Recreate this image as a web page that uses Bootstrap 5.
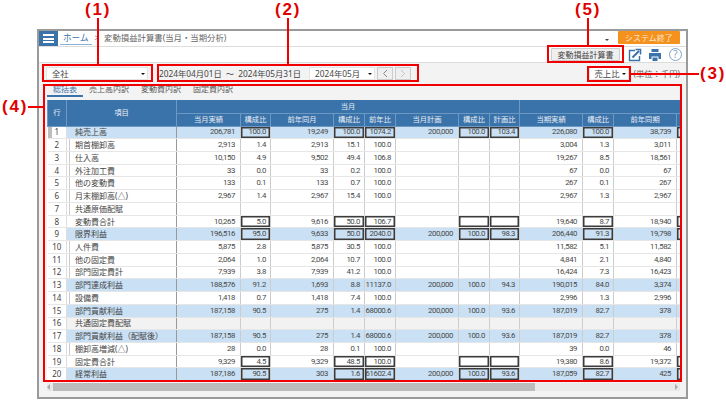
<!DOCTYPE html>
<html lang="ja">
<head>
  <meta charset="UTF-8" />
  <title>変動損益計算書</title>
  <link href="https://cdn.jsdelivr.net/npm/bootstrap@5.3.0/dist/css/bootstrap.min.css" rel="stylesheet" />
  <style>
    body {
      background: #fff;
      font-family: "Noto Sans", "Noto Sans CJK JP", sans-serif;
      font-size: 8px;
      line-height: 1;
      color: #444;
      overflow: hidden;
    }
    .stage { position: relative; width: 726px; height: 400px; padding: 29px 38px 0 37px; }
    .win { width: 651px; height: 370px; border: 2px solid #9a9a9a; background: #f3f3f3; }

    .topbar { height: 16px; background: #fff; border-bottom: 1px solid #ddd; }
    .burger { width: 19px; height: 15px; background: #3a72aa; padding: 3px 4px; }
    .burger i { display: block; height: 2px; background: #fff; }
    .crumb-home { color: #3a72aa; font-size: 8.6px; line-height: 9px; padding: 3px 3px 1px; margin-left: 2px; border-bottom: 1px solid #8ab0d6; text-decoration: none; }
    .crumb-sep { color: #888; margin: 3px 5px 0 3px; }
    .crumb-title { font-size: 8.4px; color: #666; margin-top: 3px; }
    .caret-down { width: 0; height: 0; border: 2.5px solid transparent; border-top-color: #444; border-bottom: 0; }
    .btn-quit { width: 62px; height: 13px; margin: 0 6px 0 9px; padding: 0; border: 0; border-radius: 1px; background: #f5921e; color: #fbe6cc; font-size: 8px; line-height: 13px; }

    .subbar { height: 16px; background: #fff; border-bottom: 1px solid #ddd; padding-right: 4px; }
    .btn-report { width: 69px; height: 13px; padding: 0; border: 1px solid #ccc; border-radius: 1px; background: #efefef; color: #444; font-size: 8px; line-height: 11px; }
    .ico-print { margin-left: 6px; }
    .help-mark { width: 13px; height: 13px; margin-left: 7px; border: 1px solid #7fa3c7; border-radius: 50%; color: #7fa3c7; font-size: 10px; line-height: 11px; text-align: center; }

    .toolbar { height: 21px; padding: 4px 6px 0 7px; font-size: 8.3px; }
    .tb-text { line-height: 13px; white-space: nowrap; }
    .pick { height: 13px; padding: 0 2px 0 5px; background: #fff; border: 1px solid #e4e4e4; border-radius: 0; color: #444; font-size: 8.3px; line-height: 11px; display: flex; align-items: center; justify-content: space-between; }
    .pick.dropdown-toggle::after { margin: 0; border-top-color: #111; border-top-width: 2.5px; border-left-width: 2.5px; border-right-width: 2.5px; }
    .pick-all { width: 102px; }
    .pick-month { width: 66px; margin-left: 8px; }
    .pick-ratio { width: 40px; margin-right: 5px; }
    .date-range { margin-left: 11px; }
    .date-tilde { margin: 0 4px; }
    .step { width: 16px; height: 13px; margin-left: 2px; padding: 0; background: #efefef; border: 1px solid #ccc; border-radius: 0; display: flex; align-items: center; justify-content: center; }
    .unit-text { color: #666; }

    .tabs-row { height: 13px; padding-left: 8px; margin-bottom: 3px; }
    .tabs-row .nav-link { padding: 0 6px; height: 13px; font-size: 8px; line-height: 10px; color: #555; border-bottom: 1px solid transparent; }
    .tabs-row .nav-link.active { color: #3a72aa; border-bottom: 2px solid #3a72aa; }

    .grid-wrap { width: 633px; margin-left: 8px; height: 283px; overflow: hidden; }
    .pl-grid { table-layout: fixed; border-collapse: collapse; width: 633px; background: #fff; }
    .pl-grid th { background: #3a72aa; color: #e8eef5; font-weight: 400; font-size: 7.3px; text-align: center; padding: 0; height: 13px; border: 1px solid #6c98c4; border-top: 0; }
    .pl-grid td { height: 12.74px; padding: 0 4px 0 0; text-align: right; font-family: Roboto, "Noto Sans", sans-serif; font-size: 7.8px; letter-spacing: -0.4px; line-height: 10px; white-space: nowrap; overflow: visible; border-right: 1px solid #ccc; border-bottom: 1px solid #e6e6e6; color: #484848; }
    .pl-grid td.no { text-align: center; font-family: "Noto Sans", sans-serif; font-size: 8px; letter-spacing: 0; padding: 0; background: #fff !important; border-right: 1px solid #ddd; color: #444; }
    .pl-grid td.item { text-align: left; font-family: "Noto Sans", "Noto Sans CJK JP", sans-serif; font-size: 8px; letter-spacing: 0; padding: 0 0 0 8px; border-right: 1px solid #999; color: #444; }
    .pl-grid td.indent { box-shadow: inset 2px 0 0 #fff, inset 3px 0 0 #ccc; }
    .pl-grid td.amt { padding-right: 5px; }
    .pl-grid tr.hl td { background: #cae0f4; }
    .pl-grid tr.gr td { background: #f2f2f2; }
    .pl-grid tr.head-mark td.no { box-shadow: inset 4px 0 0 #bdbdbd; }
    .pl-grid td.boxed { box-shadow: inset 0 0 0 1.5px #3c3c3c; }
    .pl-grid td.boxed-cut { border-right: 0; box-shadow: inset 1.5px 0 0 #3c3c3c, inset 0 1.5px 0 #3c3c3c, inset 0 -1.5px 0 #3c3c3c; }

    .hscroll { width: 633px; height: 8px; margin: 0 0 0 8px; background: #e9e9e9; }
    .hscroll-thumb { width: 482px; margin-left: 3px; background: #bcbcbc; }
    .arrow-l { width: 0; height: 0; border: 3px solid transparent; border-right-color: #aaa; border-left: 0; margin: 1px 0 0 0; }
    .arrow-r { width: 0; height: 0; border: 3px solid transparent; border-left-color: #aaa; border-right: 0; margin: 1px 2px 0 auto; }

    .note { position: absolute; font-family: "Liberation Sans", sans-serif; font-weight: 700; font-size: 17px; line-height: 20px; color: #e00000; letter-spacing: 1.8px; white-space: nowrap; }
    .note-box { position: absolute; border: 2px solid #f00000; }
    .note-line { position: absolute; background: #f00000; }
    .n1 { left: 85px; top: 0; }
    .n2 { left: 275px; top: 0; }
    .n5 { left: 575px; top: 0; }
    .n3 { left: 700px; top: 64px; }
    .n4 { left: 2px; top: 97px; }
    .b1 { left: 42px; top: 64px; width: 111px; height: 18px; }
    .b2 { left: 157px; top: 64px; width: 262px; height: 18px; }
    .b3 { left: 587px; top: 66px; width: 44px; height: 16px; }
    .b4 { left: 43px; top: 84px; width: 639px; height: 298px; }
    .b5 { left: 547px; top: 45px; width: 77px; height: 18px; }
    .l1 { left: 97px; top: 18px; width: 2px; height: 46px; }
    .l2 { left: 287px; top: 18px; width: 2px; height: 46px; }
    .l5 { left: 587px; top: 18px; width: 2px; height: 27px; }
    .l3 { left: 631px; top: 73px; width: 68px; height: 2px; }
    .l4 { left: 28px; top: 106px; width: 15px; height: 2px; }
  </style>
</head>
<body>
  <div class="stage">
    <div class="win">
      <div class="topbar d-flex align-items-start">
        <div class="burger d-flex flex-column justify-content-between"><i></i><i></i><i></i></div>
        <a class="crumb-home" href="#">ホーム</a>
        <span class="crumb-sep">&gt;</span>
        <span class="crumb-title">変動損益計算書(当月・当期分析)</span>
        <span class="caret-down ms-auto mt-2"></span>
        <button class="btn btn-quit mt-0">システム終了</button>
      </div>

      <div class="subbar d-flex justify-content-end align-items-center">
        <button class="btn btn-report">変動損益計算書</button>
        <svg class="ms-2" width="14" height="14" viewBox="0 0 14 14" fill="none" stroke="#3a72aa">
          <path d="M7 2.500H1.500v10h10V8" stroke-width="1.400" />
          <path d="M4.500 9.500 11 3" stroke-width="2" />
          <path d="M7.500 1.500h5v5" stroke-width="1.600" />
        </svg>
        <svg class="ico-print" width="14" height="14" viewBox="0 0 14 14" fill="#3a72aa">
          <path d="M3.500 1h7v3h-7zM1 5h12v6h-2.500V8.500h-7V11H1zM4.500 9.500h5V13h-5z" />
        </svg>
        <span class="help-mark">?</span>
      </div>

      <div class="toolbar d-flex align-items-start">
        <div class="btn pick pick-all dropdown-toggle">全社</div>
        <span class="date-range tb-text">2024年04月01日<span class="date-tilde">～</span>2024年05月31日</span>
        <div class="btn pick pick-month dropdown-toggle">2024年05月</div>
        <button class="btn step"><svg width="6" height="9" viewBox="0 0 6 9" fill="none" stroke="#888"><path d="M5 1 1.500 4.500 5 8" /></svg></button>
        <button class="btn step"><svg width="6" height="9" viewBox="0 0 6 9" fill="none" stroke="#c4c4c4"><path d="M1 1l3.500 3.500L1 8" /></svg></button>
        <div class="btn pick pick-ratio dropdown-toggle ms-auto">売上比</div>
        <span class="unit-text tb-text">(単位：千円)</span>
      </div>

      <div class="tabs-row">
        <ul class="nav">
          <li class="nav-item"><a class="nav-link active" href="#">総括表</a></li>
          <li class="nav-item"><a class="nav-link" href="#">売上高内訳</a></li>
          <li class="nav-item"><a class="nav-link" href="#">変動費内訳</a></li>
          <li class="nav-item"><a class="nav-link" href="#">固定費内訳</a></li>
        </ul>
      </div>

      <div class="grid-wrap">
        <table class="pl-grid">
          <colgroup>
            <col style="width:19px"><col style="width:110px"><col style="width:64px"><col style="width:30px">
            <col style="width:63px"><col style="width:31px"><col style="width:31px"><col style="width:63px">
            <col style="width:31px"><col style="width:30px"><col style="width:63px"><col style="width:31px">
            <col style="width:63px"><col style="width:4px">
          </colgroup>
          <thead>
            <tr><th rowspan="2">行</th><th rowspan="2">項目</th><th colspan="8">当月</th><th colspan="4"></th></tr>
            <tr><th>当月実績</th><th>構成比</th><th>前年同月</th><th>構成比</th><th>前年比</th><th>当月計画</th><th>構成比</th><th>計画比</th><th>当期実績</th><th>構成比</th><th>前年同期</th><th></th></tr>
          </thead>
          <tbody id="plBody"></tbody>
        </table>
      </div>

      <div class="hscroll d-flex align-items-start">
        <span class="arrow-l"></span>
        <div class="hscroll-thumb h-100"></div>
        <span class="arrow-r"></span>
      </div>
    </div>

    <span class="note-line l1"></span><span class="note-line l2"></span><span class="note-line l3"></span><span class="note-line l4"></span><span class="note-line l5"></span>
    <div class="note-box b1"></div><div class="note-box b2"></div><div class="note-box b3"></div><div class="note-box b4"></div><div class="note-box b5"></div>
    <span class="note n1">(1)</span><span class="note n2">(2)</span><span class="note n3">(3)</span><span class="note n4">(4)</span><span class="note n5">(5)</span>
  </div>

  <script>
    // name, values, row type: h = highlight, g = gray, i = indented, m = row marker; 4th = boxed ratio cells
    const rows = [
      ["純売上高", "206,781 100.0 19,249 100.0 1074.2 200,000 100.0 103.4 226,080 100.0 38,739", "hm", 1],
      ["期首棚卸高", "2,913 1.4 2,913 15.1 100.0 - - - 3,004 1.3 3,011", "i"],
      ["仕入高", "10,150 4.9 9,502 49.4 106.8 - - - 19,267 8.5 18,561", "i"],
      ["外注加工費", "33 0.0 33 0.2 100.0 - - - 67 0.0 67", "i"],
      ["他の変動費", "133 0.1 133 0.7 100.0 - - - 267 0.1 267", "i"],
      ["月末棚卸高(△)", "2,967 1.4 2,967 15.4 100.0 - - - 2,967 1.3 2,967", "i"],
      ["共通原価配賦", "- - - - - - - - - - -", "i"],
      ["変動費合計", "10,265 5.0 9,616 50.0 106.7 - - - 19,640 8.7 18,940", "", 1],
      ["限界利益", "196,516 95.0 9,633 50.0 2040.0 200,000 100.0 98.3 206,440 91.3 19,798", "h", 1],
      ["人件費", "5,875 2.8 5,875 30.5 100.0 - - - 11,582 5.1 11,582", "i"],
      ["他の固定費", "2,064 1.0 2,064 10.7 100.0 - - - 4,841 2.1 4,840", "i"],
      ["部門固定費計", "7,939 3.8 7,939 41.2 100.0 - - - 16,424 7.3 16,423", "i"],
      ["部門達成利益", "188,576 91.2 1,693 8.8 11137.0 200,000 100.0 94.3 190,015 84.0 3,374", "h"],
      ["設備費", "1,418 0.7 1,418 7.4 100.0 - - - 2,996 1.3 2,996", "i"],
      ["部門貢献利益", "187,158 90.5 275 1.4 68000.6 200,000 100.0 93.6 187,019 82.7 378", "h"],
      ["共通固定費配賦", "- - - - - - - - - - -", "g"],
      ["部門貢献利益（配賦後）", "187,158 90.5 275 1.4 68000.6 200,000 100.0 93.6 187,019 82.7 378", "h"],
      ["棚卸高増減(△)", "28 0.0 28 0.1 100.0 - - - 39 0.0 46", "i"],
      ["固定費合計", "9,329 4.5 9,329 48.5 100.0 - - - 19,380 8.6 19,372", "", 1],
      ["経常利益", "187,186 90.5 303 1.6 61602.4 200,000 100.0 93.6 187,059 82.7 425", "h", 1]
    ];
    const amtCols = [0, 2, 5, 8, 10];
    const boxCols = [1, 3, 4, 6, 7, 9];

    const tbody = document.getElementById("plBody");
    rows.forEach((r, idx) => {
      const [name, vals, kind, boxed] = r;
      const tr = document.createElement("tr");
      if (kind.includes("h")) tr.classList.add("hl");
      if (kind.includes("g")) tr.classList.add("gr");
      if (kind.includes("m")) tr.classList.add("head-mark");
      let html = `<td class="no">${idx + 1}</td><td class="item${kind.includes("i") ? " indent" : ""}">${name}</td>`;
      vals.split(" ").forEach((v, i) => {
        const cls = [];
        if (amtCols.includes(i)) cls.push("amt");
        if (boxed && boxCols.includes(i)) cls.push("boxed");
        html += `<td class="${cls.join(" ")}">${v === "-" ? "" : v}</td>`;
      });
      html += `<td class="${boxed ? "boxed-cut" : ""}"></td>`;
      tr.innerHTML = html;
      tbody.appendChild(tr);
    });
  </script>
  <script src="https://cdn.jsdelivr.net/npm/bootstrap@5.3.0/dist/js/bootstrap.bundle.min.js"></script>
</body>
</html>
